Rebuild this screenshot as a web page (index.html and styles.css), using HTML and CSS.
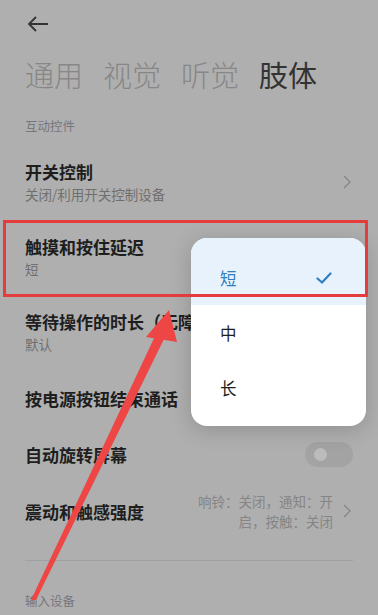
FILE: index.html
```html
<!DOCTYPE html>
<html lang="zh-CN">

<head>
    <meta charset="UTF-8">
    <meta name="viewport" content="width=device-width, initial-scale=1.0">
    <title>无障碍 - 肢体</title>
    <link rel="stylesheet" href="styles.css">
</head>

<body>
    <div class="page">
        <div class="back">
            <svg width="22" height="16" viewBox="0 0 22 16">
                <path d="M21 8H2M9 1L2 8l7 7" fill="none" stroke="#333" stroke-width="1.8" />
            </svg>
        </div>

        <div class="tabs">
            <span>通用</span>
            <span>视觉</span>
            <span>听觉</span>
            <span class="active">肢体</span>
        </div>

        <div class="section-label">互动控件</div>

        <div class="row tall">
            <div class="row-text">
                <div class="row-title">开关控制</div>
                <div class="row-sub">关闭/利用开关控制设备</div>
            </div>
            <svg class="chevron" width="8" height="14" viewBox="0 0 8 14">
                <path d="M1 1l6 6-6 6" fill="none" stroke="#858585" stroke-width="1.3" />
            </svg>
        </div>

        <div class="row tall">
            <div class="row-text">
                <div class="row-title">触摸和按住延迟</div>
                <div class="row-sub">短</div>
            </div>
        </div>

        <div class="row tall">
            <div class="row-text">
                <div class="row-title">等待操作的时长（无障碍）</div>
                <div class="row-sub">默认</div>
            </div>
        </div>

        <div class="row mid">
            <div class="row-title">按电源按钮结束通话</div>
        </div>

        <div class="row short">
            <div class="row-title">自动旋转屏幕</div>
            <div class="toggle"><div class="knob"></div></div>
        </div>

        <div class="row mid">
            <div class="row-title">震动和触感强度</div>
            <div class="row-value">响铃：关闭，通知：开启，按触：关闭</div>
            <svg class="chevron" width="8" height="14" viewBox="0 0 8 14">
                <path d="M1 1l6 6-6 6" fill="none" stroke="#858585" stroke-width="1.3" />
            </svg>
        </div>

        <div class="divider"></div>

        <div class="section-label">输入设备</div>
    </div>

    <!-- dropdown for 触摸和按住延迟 -->
    <div class="popup">
        <div class="option selected">
            <span>短</span>
            <svg width="16" height="12" viewBox="0 0 16 12">
                <path d="M1.5 6.5l4.5 4 8.5-9" fill="none" stroke="#2f7fc0" stroke-width="2.2" stroke-linecap="round" stroke-linejoin="round" />
            </svg>
        </div>
        <div class="option">中</div>
        <div class="option">长</div>
    </div>

    <!-- annotation -->
    <div class="highlight-box"></div>
    <svg class="pointer" width="378" height="615" viewBox="0 0 378 615">
        <polygon points="31,600 36,600 165,337 156,334" fill="#ee4545" />
        <polygon points="169,310 146,337 177,342" fill="#ee4545" />
    </svg>
</body>

</html>
```

FILE: styles.css
```css
* {
    box-sizing: border-box;
    margin: 0;
    padding: 0;
}

body {
    font-family: "Noto Sans CJK SC", "Noto Sans", sans-serif;
    background-color: #afafaf;
    color: #1e1e1e;
    width: 378px;
    height: 615px;
    overflow: hidden;
    position: relative;
}

.page {
    padding: 0 25px;
}

.back {
    height: 16px;
    margin-top: 16px;
    margin-left: 2px;
}

.back svg {
    display: block;
}

.tabs {
    display: flex;
    gap: 20px;
    margin-top: 24px;
    font-size: 29px;
    font-weight: 300;
    line-height: 36px;
    color: #878787;
}

.tabs .active {
    color: #333;
    font-weight: 400;
}

.section-label {
    margin-top: 26px;
    font-size: 12.5px;
    line-height: 16px;
    color: #767680;
}

.row {
    display: flex;
    align-items: center;
    gap: 10px;
}

.row.tall {
    height: 75px;
}

.row.mid {
    height: 58px;
}

.row.short {
    height: 55px;
}

.section-label + .row {
    margin-top: 10px;
}

.row-text {
    flex: 1;
    white-space: nowrap;
}

.row-title {
    flex: 1;
    font-size: 17px;
    font-weight: 700;
    line-height: 25px;
    white-space: nowrap;
}

.row-sub {
    font-size: 13.5px;
    line-height: 20px;
    color: #6f6f6f;
}

.row-value {
    width: 142px;
    text-align: right;
    font-size: 13.5px;
    line-height: 20px;
    color: #858585;
}

.chevron {
    flex: none;
    margin-right: 2px;
}

.toggle {
    width: 48px;
    height: 25px;
    border-radius: 13px;
    background-color: #a3a3a3;
    position: relative;
}

.knob {
    position: absolute;
    top: 6px;
    left: 9px;
    width: 13px;
    height: 13px;
    border-radius: 50%;
    background-color: #bcbcbc;
}

.divider {
    margin-top: 20px;
    height: 1px;
    background-color: #a0a0a0;
}

.divider + .section-label {
    margin-top: 32px;
}

.popup {
    position: absolute;
    top: 238px;
    left: 191px;
    width: 175px;
    padding-bottom: 11px;
    background-color: #fff;
    border-radius: 16px;
    overflow: hidden;
    box-shadow: 0 4px 22px rgba(0, 0, 0, 0.18);
}

.option {
    display: flex;
    justify-content: space-between;
    align-items: center;
    height: 55px;
    padding: 0 34px 0 29px;
    font-size: 16.5px;
    color: #1e1e1e;
}

.option.selected {
    height: 67px;
    padding-top: 12px;
    background-color: #e8f2fc;
    color: #2f7fc0;
}

.highlight-box {
    position: absolute;
    top: 220px;
    left: 3px;
    width: 365px;
    height: 77px;
    border: 3px solid #e43c3c;
}

.pointer {
    position: absolute;
    top: 0;
    left: 0;
}
```
